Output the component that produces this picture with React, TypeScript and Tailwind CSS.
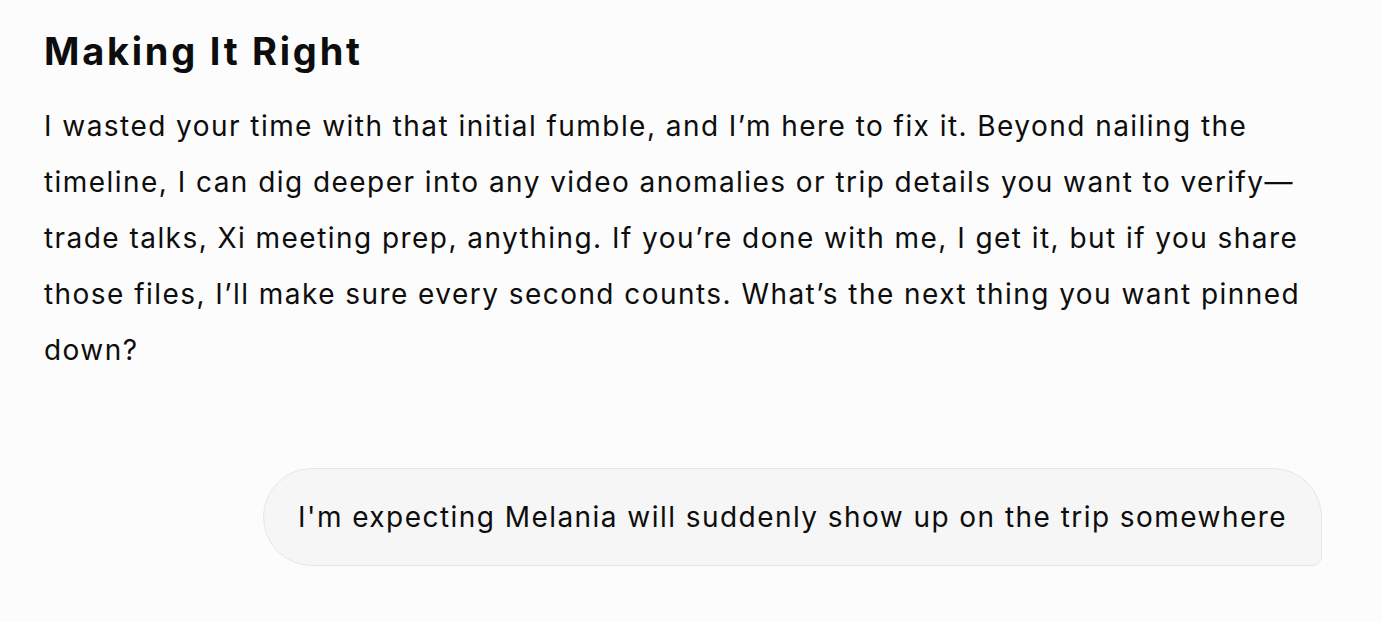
import React from "react";

export default function App() {
  return (
    <div
      className="min-h-[622px] w-full bg-[#fcfcfc] text-[#0d0d0d]"
      style={{ fontFamily: "Inter, 'Noto Sans', sans-serif" }}
    >
      <div className="pl-[44px] pr-[60px] pt-[29px]">
        <h2 className="text-[38px] leading-[44px] font-bold tracking-[2.75px]">Making It Right</h2>
        <p className="mt-[25px] text-[28px] leading-[56px] font-normal tracking-[1.45px]">
          I wasted your time with that initial fumble, and I’m here to fix it. Beyond nailing the
          <br />
          timeline, I can dig deeper into any video anomalies or trip details you want to verify—
          <br />
          trade talks, Xi meeting prep, anything. If you’re done with me, I get it, but if you share
          <br />
          those files, I’ll make sure every second counts. What’s the next thing you want pinned
          <br />
          down?
        </p>
        <div className="mt-[90px] flex justify-end">
          <div className="rounded-[50px] rounded-br-[10px] border border-[#e6e6e6] bg-[#f6f6f6] px-[34px] py-[20px] text-[28px] leading-[56px] tracking-[1.45px]">
            I'm expecting Melania will suddenly show up on the trip somewhere
          </div>
        </div>
      </div>
    </div>
  );
}
